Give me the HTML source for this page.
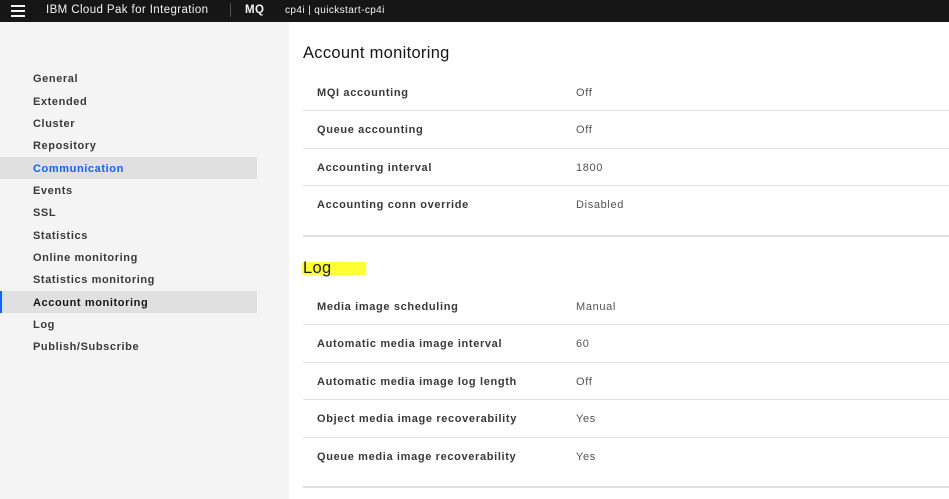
<!DOCTYPE html>
<html><head><style>
*{margin:0;padding:0;box-sizing:border-box}
body{width:949px;height:499px;overflow:hidden;background:#fff;font-family:"Liberation Sans",sans-serif;position:relative}
.hdr{position:absolute;left:0;top:0;width:949px;height:22px;background:#161616;color:#f4f4f4;font-size:11.5px}
.hdr span{position:absolute;top:4px;letter-spacing:0.4px}
.side{position:absolute;left:0;top:22px;width:289px;height:477px;background:#f4f4f4}
.nav{position:absolute;left:0;width:257px;height:22px;font-size:11px;font-weight:bold;color:#393939;padding-left:33px;line-height:24px;letter-spacing:0.6px}
.act{background:#e0e0e0}
.t{position:absolute;left:303px;font-size:16.5px;color:#161616;letter-spacing:0.3px}
.r{position:absolute;left:303px;width:646px;height:37.5px;font-size:11px;color:#393939;letter-spacing:0.65px}
.r b{position:absolute;left:14px;top:50%;transform:translateY(-40%)}
.r i{position:absolute;left:273px;top:50%;transform:translateY(-40%);font-style:normal;color:#525252}
.ln{position:absolute;left:303px;width:646px;height:1px;background:#e0e0e0}
</style></head><body>
<div class="hdr">
<div style="position:absolute;left:11px;top:5px;width:14px;height:2px;background:#f4f4f4"></div>
<div style="position:absolute;left:11px;top:10px;width:14px;height:2px;background:#f4f4f4"></div>
<div style="position:absolute;left:11px;top:15px;width:14px;height:2px;background:#f4f4f4"></div>
<span style="left:46px">IBM Cloud Pak for Integration</span>
<div style="position:absolute;left:230px;top:3px;width:1px;height:14px;background:#525252"></div>
<span style="left:245px;font-weight:bold">MQ</span>
<span style="left:285px;font-size:10px;top:5px">cp4i | quickstart-cp4i</span>
</div>
<div class="side">
<div class="nav" style="top:45px">General</div>
<div class="nav" style="top:68px">Extended</div>
<div class="nav" style="top:90px">Cluster</div>
<div class="nav" style="top:112px">Repository</div>
<div class="nav act" style="top:135px;color:#0f62fe">Communication</div>
<div class="nav" style="top:157px">Events</div>
<div class="nav" style="top:179px">SSL</div>
<div class="nav" style="top:202px">Statistics</div>
<div class="nav" style="top:224px">Online monitoring</div>
<div class="nav" style="top:246px">Statistics monitoring</div>
<div class="nav act" style="top:269px;color:#161616;border-left:2px solid #0f62fe;padding-left:31px">Account monitoring</div>
<div class="nav" style="top:291px">Log</div>
<div class="nav" style="top:313px">Publish/Subscribe</div>
</div>
<div class="t" style="top:44px">Account monitoring</div>
<div class="r" style="top:73px"><b>MQI accounting</b><i>Off</i></div>
<div class="ln" style="top:110px"></div>
<div class="r" style="top:110px"><b>Queue accounting</b><i>Off</i></div>
<div class="ln" style="top:148px"></div>
<div class="r" style="top:148px"><b>Accounting interval</b><i>1800</i></div>
<div class="ln" style="top:185px"></div>
<div class="r" style="top:185px"><b>Accounting conn override</b><i>Disabled</i></div>
<div class="ln" style="top:235px;height:2px"></div>
<div style="position:absolute;left:302px;top:262px;width:64px;height:13px;background:#ffff33;border-radius:2px"></div>
<div class="t" style="top:259px">Log</div>
<div class="r" style="top:287px"><b>Media image scheduling</b><i>Manual</i></div>
<div class="ln" style="top:324px"></div>
<div class="r" style="top:324px"><b>Automatic media image interval</b><i>60</i></div>
<div class="ln" style="top:362px"></div>
<div class="r" style="top:362px"><b>Automatic media image log length</b><i>Off</i></div>
<div class="ln" style="top:399px"></div>
<div class="r" style="top:399px"><b>Object media image recoverability</b><i>Yes</i></div>
<div class="ln" style="top:437px"></div>
<div class="r" style="top:437px"><b>Queue media image recoverability</b><i>Yes</i></div>
<div class="ln" style="top:486px;height:2px"></div>
</body></html>
